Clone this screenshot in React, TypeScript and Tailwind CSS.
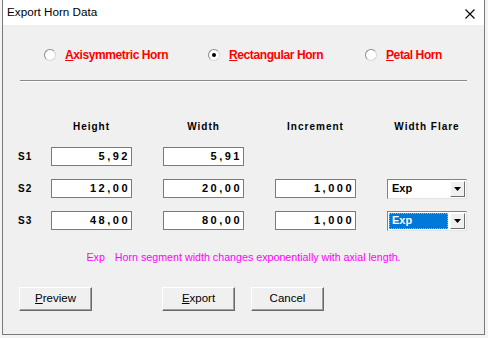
import React from "react"

const rows = [
  { label: "S1", height: "5,92", width: "5,91", inc: null, flare: null },
  { label: "S2", height: "12,00", width: "20,00", inc: "1,000", flare: "normal" },
  { label: "S3", height: "48,00", width: "80,00", inc: "1,000", flare: "focused" },
]

function Radio({ checked }: { checked?: boolean }) {
  return (
    <div className="w-[12px] h-[12px] rounded-full border border-[#8c8c8c] border-b-[#d4d4d4] border-r-[#d4d4d4] bg-white flex items-center justify-center">
      {checked && <div className="w-[4px] h-[4px] rounded-full bg-black" />}
    </div>
  )
}

function Field({ value }: { value: string }) {
  return (
    <div className="w-[81px] h-[19px] bg-white border border-[#7a7a7a] flex items-center justify-end pr-[1px] text-[11px] font-bold tracking-[2.5px] text-black">
      {value}
    </div>
  )
}

function Combo({ focused }: { focused?: boolean }) {
  return (
    <div className="w-[80px] h-[20px] bg-white border border-[#828282] border-b-[#e3e3e3] border-r-[#e3e3e3] flex p-[1px]">
      <div className="flex-1 flex items-center pr-[2px]">
        {focused ? (
          <div className="w-full h-full bg-[#0078d7] border border-dotted border-[#f3a53a] flex items-center pl-[2px] text-[11px] font-bold text-white">
            Exp
          </div>
        ) : (
          <div className="pl-[3px] text-[11px] font-bold text-black">Exp</div>
        )}
      </div>
      <div className="w-[15px] bg-[#f0f0f0] border border-white border-b-[#6e6e6e] border-r-[#6e6e6e] flex items-center justify-center">
        <svg width="7" height="4" viewBox="0 0 7 4">
          <path d="M0 0h7L3.5 4z" fill="#000" />
        </svg>
      </div>
    </div>
  )
}

function Button({ children }: { children: React.ReactNode }) {
  return (
    <div className="w-[73px] h-[24px] bg-[#f0f0f0] border border-white border-b-[#696969] border-r-[#696969] shadow-[inset_-1px_-1px_0_#a0a0a0] flex items-center justify-center text-[11.5px] text-black">
      {children}
    </div>
  )
}

export default function App() {
  return (
    <div className="w-[488px] h-[338px] bg-[#f4f4f4] overflow-hidden font-['Liberation_Sans',Arial,sans-serif]">
      <div className="ml-[2px] w-[483px] h-[335px] border-x border-b border-[#7a7a7a] bg-[#f0f0f0] flex flex-col">
        {/* title bar */}
        <div className="h-[25px] bg-white flex justify-between pl-[4px] pr-[9px]">
          <span className="mt-[5px] text-[11.7px] leading-[14px] text-black">Export Horn Data</span>
          <svg className="mt-[9px]" width="10" height="10" viewBox="0 0 10 10">
            <path d="M0.5 0.5L9.5 9.5M9.5 0.5L0.5 9.5" stroke="#000" strokeWidth="1.1" />
          </svg>
        </div>

        {/* horn type */}
        <div className="mt-[22px] h-[15px] flex items-center pl-[41px] text-[12px] font-bold tracking-[-0.4px] text-[#ff0000]">
          <div className="w-[164px] flex items-center gap-[9px]">
            <Radio />
            <span><span className="underline">A</span>xisymmetric Horn</span>
          </div>
          <div className="w-[157px] flex items-center gap-[9px]">
            <Radio checked />
            <span><span className="underline">R</span>ectangular Horn</span>
          </div>
          <div className="flex items-center gap-[9px]">
            <Radio />
            <span><span className="underline">P</span>etal Horn</span>
          </div>
        </div>

        <div className="mt-[18px] ml-[17px] w-[447px] h-px bg-[#8a8a8a]" />
        <div className="ml-[17px] w-[447px] h-px bg-white" />

        {/* table */}
        <div className="mt-[38px] pl-[15px] text-[10px] font-bold tracking-[1px] text-black">
          <div className="flex h-[13px] leading-[13px]">
            <div className="w-[33px]" />
            <div className="flex gap-[31px]">
              <div className="w-[81px] text-center">Height</div>
              <div className="w-[81px] text-center">Width</div>
              <div className="w-[81px] text-center">Increment</div>
              <div className="w-[80px] text-center">Width Flare</div>
            </div>
          </div>
          <div className="mt-[13px] flex flex-col gap-[11px] tracking-normal">
            {rows.map((r) => (
              <div key={r.label} className="flex h-[21px] items-center">
                <div className="w-[33px] tracking-[1px]">{r.label}</div>
                <div className="flex items-center gap-[31px]">
                  <Field value={r.height} />
                  <Field value={r.width} />
                  {r.inc ? <Field value={r.inc} /> : <div className="w-[81px]" />}
                  {r.flare ? <Combo focused={r.flare === "focused"} /> : <div className="w-[80px]" />}
                </div>
              </div>
            ))}
          </div>
        </div>

        <div className="mt-[20px] text-center text-[10.7px] leading-[13px] text-[#ff00ff]">
          <span className="mr-[10px]">Exp</span>Horn segment width changes exponentially with axial length.
        </div>

        {/* buttons */}
        <div className="mt-[23px] pl-[16px] flex">
          <Button><span className="underline">P</span>review</Button>
          <div className="w-[70px]" />
          <Button><span className="underline">E</span>xport</Button>
          <div className="w-[16px]" />
          <Button>Cancel</Button>
        </div>
      </div>
    </div>
  )
}
